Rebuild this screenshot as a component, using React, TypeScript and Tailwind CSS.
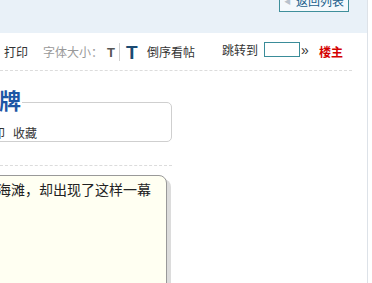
import React from "react";

export default function App() {
  return (
    <div className="w-[372px] h-[283px] overflow-hidden flex bg-white font-['Noto_Sans_CJK_SC',sans-serif]">
      <div className="w-[367px] shrink-0 flex flex-col">
        {/* top band */}
        <div className="h-[33px] shrink-0 bg-[#e9f1f8] flex justify-end items-start pr-[18px]">
          <div className="-mt-[10px] h-[22px] w-[70px] border border-[#3f8f9b] bg-[#f4f9fc] flex items-center pl-[4px] text-[12px] leading-none text-[#1a5f8c]">
            <span className="text-[7px] text-[#b8c2cc] mr-[5px]">◀</span>
            <span>返回列表</span>
          </div>
        </div>

        {/* toolbar */}
        <div className="mt-[9px] h-[20px] flex items-center pl-[4px] text-[12px] leading-none">
          <span className="w-[39px] text-[#333]">打印</span>
          <span className="w-[64px] text-[#999]">字体大小：</span>
          <span className="w-[12px] text-[13px] font-bold text-[#555] font-['Liberation_Sans',sans-serif]">T</span>
          <span className="w-px h-[18px] bg-[#d0d0d0]" />
          <span className="ml-[6px] w-[21px] text-[19px] font-bold text-[#1b4a72] font-['Liberation_Sans',sans-serif]">T</span>
          <span className="w-[75px] text-[#333]">倒序看帖</span>
          <div className="flex items-center mb-[5px]">
            <span className="w-[42px] text-[#333]">跳转到</span>
            <input className="w-[36px] h-[15px] border border-[#3a8c99] bg-white outline-none" />
            <span className="ml-[1px] w-[18px] text-[14px] text-[#333] font-['Liberation_Sans',sans-serif]">»</span>
          </div>
          <span className="font-bold text-[#d40000]">楼主</span>
        </div>

        {/* dashed */}
        <div className="mt-[8px] w-[352px] border-t border-dashed border-[#dcdcdc]" />

        {/* title block */}
        <div className="mt-[16px] -ml-[30px] w-[202px]">
          <div className="relative z-10 h-[24px] leading-[24px] text-[22px] font-bold text-[#1d56a5] pl-[7px]">
            <span className="inline-block bg-white pr-[1px]">品牌</span>
          </div>
          <div className="-mt-[9px] h-[40px] border border-[#cfcfcf] rounded-[5px] pl-[10px] pt-[23px]">
            <div className="flex gap-[8px] h-[14px] leading-[14px] text-[12px] text-[#333]">
              <span>打印</span>
              <span>收藏</span>
            </div>
          </div>
        </div>

        {/* dashed */}
        <div className="mt-[23px] w-[172px] border-t border-dashed border-[#dcdcdc]" />

        {/* post */}
        <div className="mt-[9px] -ml-[40px] w-[207px] h-[200px] shrink-0 border border-[#999] rounded-tr-[8px] bg-[#fffff2] shadow-[4px_4px_0_#dcdcdc] pl-[36px] pt-[3px]">
          <div className="leading-[20px] text-[14px] text-[#222] whitespace-nowrap">海滩，却出现了这样一幕</div>
        </div>
      </div>
      <div className="w-[5px] shrink-0 border-l border-[#dde2e8] bg-white" />
    </div>
  );
}
